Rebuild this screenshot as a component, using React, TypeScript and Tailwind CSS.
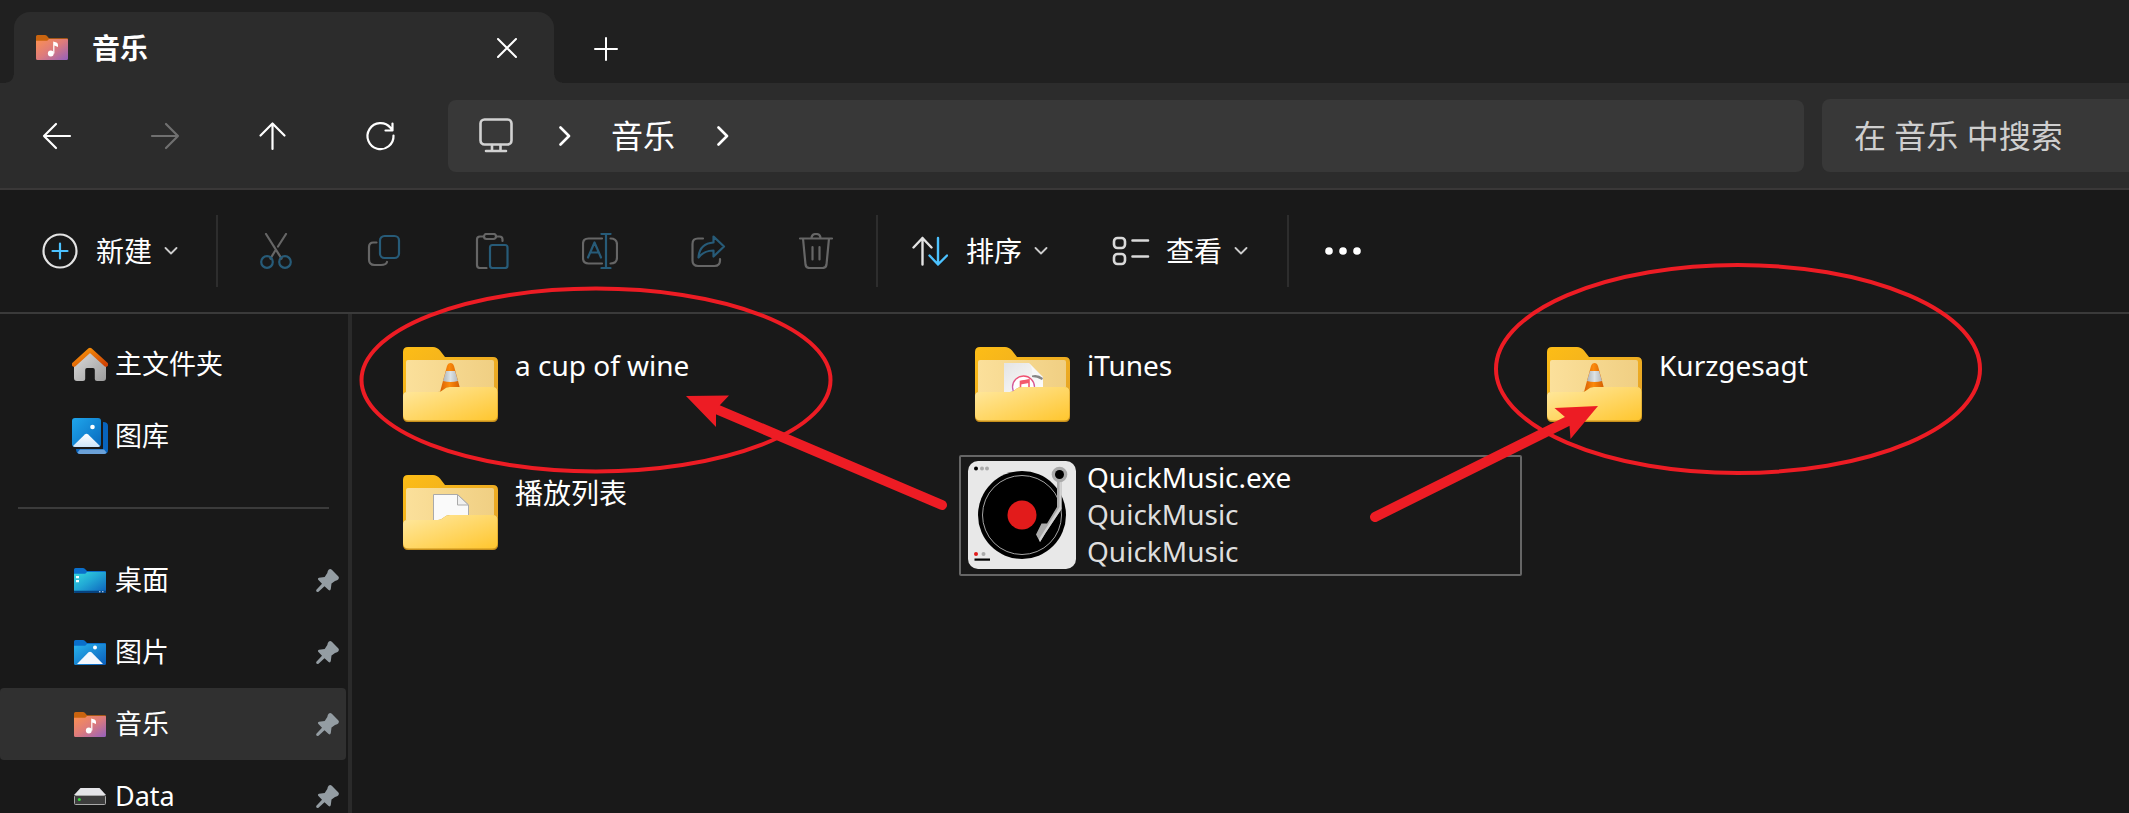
import type { ReactNode } from "react";

/* ---------- small folder icons ---------- */

function MusicFolder() {
  return (
    <svg className="h-[25px] w-8" viewBox="0 0 32 25" aria-hidden="true">
      <defs>
        <linearGradient id="mf" x1="0" y1="0" x2="1" y2="1">
          <stop offset="0" stopColor="#fd9150" />
          <stop offset="0.5" stopColor="#dd7b7c" />
          <stop offset="1" stopColor="#9460bd" />
        </linearGradient>
      </defs>
      <path d="M0 1.5Q0 0 1.5 0H9Q10 0 10.8.8L13 3.2H31Q32 3.2 32 4.2V12H0Z" fill="#c9640f" />
      <path d="M0 5.8H10.4Q11.2 5.8 11.8 5.2L13 4H31Q32 4 32 5V23.500Q32 25 30.500 25H1.500Q0 25 0 23.500Z" fill="url(#mf)" />
      <circle cx="14.800" cy="18.500" r="2.900" fill="#fff" />
      <path d="M17.200 18.500V6.500L20.500 7.500Q22.300 8.300 22 12L18.400 10.500V18.500Z" fill="#fff" />
    </svg>
  );
}

function DesktopFolder() {
  return (
    <svg className="h-[25px] w-8" viewBox="0 0 32 25" aria-hidden="true">
      <defs>
        <linearGradient id="df" x1="0" y1="0" x2="1" y2="1">
          <stop offset="0" stopColor="#35d8de" />
          <stop offset="0.45" stopColor="#22a9d5" />
          <stop offset="1" stopColor="#0c5fbc" />
        </linearGradient>
      </defs>
      <path d="M0 1.500Q0 0 1.500 0H9Q10 0 10.800.8L13 3H31Q32 3 32 4V12H0Z" fill="#0a6fcb" />
      <path d="M0 5.800H10.400Q11.200 5.800 11.800 5.200L13 4H31Q32 4 32 5V23.500Q32 25 30.500 25H1.500Q0 25 0 23.500Z" fill="url(#df)" />
      <path d="M0 22.800H32V23.500Q32 25 30.500 25H1.500Q0 25 0 23.500Z" fill="#07427f" />
      <path d="M2 8h3v2.200H2zM2 12h3v2.200H2z" fill="#f2ffff" />
      <path d="M25 23.200h1.500v1H25zM28 23.200h1.500v1H28z" fill="#cfe6ff" />
    </svg>
  );
}

function PicturesFolder() {
  return (
    <svg className="h-[25px] w-8" viewBox="0 0 32 25" aria-hidden="true">
      <defs>
        <linearGradient id="pf" x1="0" y1="0" x2="1" y2="1">
          <stop offset="0" stopColor="#28b4ee" />
          <stop offset="1" stopColor="#0a5dbb" />
        </linearGradient>
      </defs>
      <path d="M0 1.500Q0 0 1.500 0H9Q10 0 10.800.8L13 3H31Q32 3 32 4V12H0Z" fill="#0a6fcb" />
      <path d="M0 5.800H10.400Q11.200 5.800 11.800 5.200L13 4H31Q32 4 32 5V23.500Q32 25 30.500 25H1.500Q0 25 0 23.500Z" fill="url(#pf)" />
      <path d="M3 24L14.500 12.300Q16 11 17.500 12.300L29 24Z" fill="#f3f8fe" />
      <circle cx="21" cy="7.500" r="2" fill="#fff" />
    </svg>
  );
}

function HomeIcon() {
  return (
    <svg className="h-[34px] w-9" viewBox="0 0 36 34" aria-hidden="true">
      <defs>
        <linearGradient id="hr" x1="0" y1="0" x2="1" y2="1">
          <stop offset="0" stopColor="#fb9a0a" />
          <stop offset="1" stopColor="#cf4204" />
        </linearGradient>
        <linearGradient id="hb" x1="0" y1="0" x2="1" y2="1">
          <stop offset="0" stopColor="#dedede" />
          <stop offset="1" stopColor="#9c9c9c" />
        </linearGradient>
      </defs>
      <path d="M2 17L18 3L34 17V31Q34 34 31 34H25Q22.800 34 22.800 32V23Q22.800 21 21 21H15Q13.200 21 13.200 23V32Q13.200 34 11 34H5Q2 34 2 31Z" fill="url(#hb)" />
      <path d="M2 17.500L18 3L34 17.500" fill="none" stroke="url(#hr)" strokeWidth="4.400" strokeLinecap="round" strokeLinejoin="round" />
    </svg>
  );
}

function GalleryIcon() {
  return (
    <svg className="size-9" viewBox="0 0 36 36" aria-hidden="true">
      <defs>
        <linearGradient id="gf" x1="0" y1="0" x2="1" y2="1">
          <stop offset="0" stopColor="#1fa6ec" />
          <stop offset="1" stopColor="#0869bd" />
        </linearGradient>
        <linearGradient id="gm" x1="0" y1="0" x2="0" y2="1">
          <stop offset="0" stopColor="#fff" />
          <stop offset="1" stopColor="#cde6fb" />
        </linearGradient>
      </defs>
      <path d="M31 4Q36 4 36 8V32Q36 36 32 36H8Q4 36 4 31H31Z" fill="#0864bd" />
      <path d="M5.500 34.500L8 31.500H32L34.500 34.500Q33.500 36 32 36H8Q6.500 36 5.500 34.500Z" fill="#6ba1d8" />
      <rect width="31" height="31" fill="#191919" />
      <rect width="29" height="29" rx="3" fill="url(#gf)" />
      <path d="M1 28L12.800 16.400Q14.500 15 16.200 16.400L28 28Q27.500 29 26 29H3Q1.500 29 1 28Z" fill="url(#gm)" />
      <circle cx="20.500" cy="9" r="2.300" fill="#fff" />
    </svg>
  );
}

function DriveIcon() {
  return (
    <svg className="h-[17px] w-8" viewBox="0 0 32 17" aria-hidden="true">
      <path d="M6.500 0H25.500L32 7H0Z" fill="#e4e4e8" />
      <rect x="0.500" y="7.500" width="31" height="9" rx="1" fill="#3d3d3d" stroke="#a9a9a9" />
      <circle cx="5.300" cy="11.500" r="1.500" fill="#35d63a" />
    </svg>
  );
}

function PinIcon() {
  return (
    <svg className="size-[23px]" viewBox="0 0 23 23" aria-hidden="true" fill="#949da3">
      <path d="M12.600 .8Q14.200 -.6 15.800 .8L22.200 7.200Q23.600 8.800 22.200 10.400Q21.500 11.200 19 12L15.500 14.500L14.800 20Q14.300 22.200 12.600 21L8.500 17.200L2.500 22.700Q1.200 23.300.5 22.500T.6 20.500L6 14.700L2.200 10.700Q1.400 9.300 3 8.700L8.700 7.900L11.300 4Q11.700 1.700 12.600 .8Z" />
    </svg>
  );
}

/* ---------- large item icons ---------- */

function Folder({ id, children }: { id: string; children: ReactNode }) {
  return (
    <svg className="size-[108px]" viewBox="0 1 108 108" aria-hidden="true">
      <defs>
        <linearGradient id={id + "b"} x1="0" y1="0" x2="1" y2="1">
          <stop offset="0" stopColor="#fdbd16" />
          <stop offset="1" stopColor="#e2a02a" />
        </linearGradient>
        <linearGradient id={id + "i"} x1="0" y1="0" x2="1" y2="0">
          <stop offset="0" stopColor="#fbe09b" />
          <stop offset="1" stopColor="#f0cf83" />
        </linearGradient>
        <linearGradient id={id + "f"} x1="0" y1="0" x2="1" y2="1">
          <stop offset="0" stopColor="#ffe9a2" />
          <stop offset="1" stopColor="#ffc62e" />
        </linearGradient>
      </defs>
      <path d="M7 20Q7 15 12 15H37Q41 15 44 18.500L49 25H97Q102 25 102 30V84Q102 89 97 89H12Q7 89 7 84Z" fill={`url(#${id}b)`} />
      <path d="M10 30Q10 28 12 28H96Q98 28 98 30V62H10Z" fill={`url(#${id}i)`} />
      {children}
      <path d="M7 64Q7 60 11 60H42Q45 60 47 58Q50 55 54 55H97Q102 55 102 60V84Q102 90 97 90H12Q7 90 7 84Z" fill="#c8901c" />
      <path d="M7 64Q7 60 11 60H42Q45 60 47 58Q50 55 54 55H97Q101.500 55 101.500 60V83Q101.500 88.500 96 88.500H13Q7 88.500 7 83Z" fill={`url(#${id}f)`} />
    </svg>
  );
}

function Cone({ id }: { id: string }) {
  return (
    <g>
      <defs>
        <linearGradient id={id + "o"} x1="0" y1="0" x2="1" y2="0">
          <stop offset="0" stopColor="#d85f04" />
          <stop offset="0.45" stopColor="#fb8a0c" />
          <stop offset="1" stopColor="#cf5800" />
        </linearGradient>
        <linearGradient id={id + "w"} x1="0" y1="0" x2="1" y2="0">
          <stop offset="0" stopColor="#aeb3b5" />
          <stop offset="0.5" stopColor="#dce2e5" />
          <stop offset="1" stopColor="#b4b8ba" />
        </linearGradient>
      </defs>
      <path d="M44 60L51 34Q52 31 54.500 31T58 34L65 60Z" fill={`url(#${id}o)`} />
      <path d="M50 39H59L62 49Q54.500 51 47 49Z" fill={`url(#${id}w)`} />
    </g>
  );
}

function Sheet() {
  return (
    <g stroke="#aaa" strokeWidth="1">
      <path d="M37.500 62V34.500H61.500L72.500 45V62Z" fill="#fafafa" />
      <path d="M61.500 34.500V45H72.500Z" fill="#f0f0f0" />
    </g>
  );
}

function TunesSheet() {
  return (
    <g>
      <defs>
        <linearGradient id="ring" x1="0" y1="0" x2="0" y2="1">
          <stop offset="0" stopColor="#f2506e" />
          <stop offset="1" stopColor="#a36be0" />
        </linearGradient>
        <linearGradient id="pg" x1="0" y1="0" x2="1" y2="1">
          <stop offset="0" stopColor="#e4e4e4" />
          <stop offset="1" stopColor="#fff" />
        </linearGradient>
      </defs>
      <path d="M36 62V31H61L75 45V62Z" fill="url(#pg)" />
      <path d="M61 31Q65 36 64 43Q70 42 75 46Z" fill="#f8f8f8" />
      <path d="M64 43.500Q70 42 75 46L74 48Q69 45 64 45Z" fill="#858585" />
      <circle cx="55.500" cy="55" r="11" fill="#fff" stroke="url(#ring)" strokeWidth="1.300" />
      <path d="M52.500 60V49.500L61 48V58" fill="none" stroke="#f35a6c" strokeWidth="1.600" />
      <path d="M52.500 49L61 47.500V51L52.500 52.500Z" fill="#f35a6c" />
    </g>
  );
}

function Turntable() {
  return (
    <svg className="size-[108px]" viewBox="0 0 108 108" aria-hidden="true">
      <rect width="108" height="108" rx="10" fill="#e8e8e8" />
      <circle cx="54" cy="54" r="44" fill="#000" />
      <circle cx="54" cy="54" r="39.500" fill="none" stroke="#a4a4a4" strokeWidth="1" />
      <circle cx="54" cy="54" r="14.500" fill="#e21b1b" />
      <path d="M89 20H93.500V48L77.500 72L72 81L68 73.500L73.500 62.500H79L89 46Z" fill="#aaa" />
      <path d="M91.500 20H93.500V48L77.500 72L72 81L71 78L89 50L91.500 46Z" fill="#d2d2d2" />
      <circle cx="91.500" cy="13.500" r="7.800" fill="#aaa" />
      <circle cx="91.500" cy="13.500" r="4.500" fill="#000" />
      <circle cx="8" cy="7.500" r="2" fill="#000" />
      <circle cx="14" cy="7.500" r="2" fill="#aaa" />
      <circle cx="19" cy="7.500" r="2" fill="#aaa" />
      <circle cx="8" cy="93" r="2" fill="#e21b1b" />
      <circle cx="15.500" cy="93" r="2" fill="#aaa" />
      <rect x="6.500" y="97.500" width="15.500" height="2.200" fill="#000" />
    </svg>
  );
}

/* ---------- line icons ---------- */

function Line({ children, color = "#fff", width = 2.2 }: { children: ReactNode; color?: string; width?: number }) {
  return (
    <svg className="size-9" viewBox="0 0 36 36" fill="none" stroke={color} strokeWidth={width} strokeLinecap="round" strokeLinejoin="round" aria-hidden="true">
      {children}
    </svg>
  );
}

const GREY = "#666";
const BLUE = "#275b78";

const tools: { label: string; icon: ReactNode }[] = [
  {
    label: "剪切",
    icon: (
      <Line color={GREY}>
        <path d="M8 1L23.500 25.500M28 1L20 13.500M17 18L12.500 25.500" />
        <circle cx="9" cy="29" r="5.800" stroke={BLUE} />
        <circle cx="27" cy="29" r="5.800" stroke={BLUE} />
      </Line>
    ),
  },
  {
    label: "复制",
    icon: (
      <Line color={GREY}>
        <path d="M10.500 9.500H7.500Q3 9.500 3 14V26.500Q3 32 8.500 32H15Q20 32 21 29" />
        <rect x="14" y="3" width="19" height="22" rx="4.500" stroke={BLUE} />
      </Line>
    ),
  },
  {
    label: "粘贴",
    icon: (
      <Line color={GREY}>
        <path d="M10 3.500H6Q3 3.500 3 6.500V32Q3 35 6 35H12.500M22 3.500H25.500Q28.500 3.500 28.500 6.500V8" />
        <rect x="10" y="1" width="12" height="5" rx="2.500" />
        <rect x="16" y="12" width="17.500" height="23" rx="2.500" stroke={BLUE} />
      </Line>
    ),
  },
  {
    label: "重命名",
    icon: (
      <Line color={GREY}>
        <path d="M20 5.500H6.500Q1 5.500 1 11V25Q1 30.500 6.500 30.500H20M28.500 5.500Q35 5.500 35 11.500V24.500Q35 30.500 28.500 30.500" />
        <path d="M6 24.500L12.500 9.500L19 24.500M8.500 19.500H16.500M19.500 1H28.500M19.500 35H28.500M24 1V35" stroke={BLUE} />
      </Line>
    ),
  },
  {
    label: "共享",
    icon: (
      <Line color={GREY}>
        <path d="M13 5.500H8Q2.500 5.500 2.500 11V27.500Q2.500 33 8 33H24.500Q30 33 30 27.500V26" />
        <path d="M23.500 3.500L34 13.500L23.500 23.500V17.500Q14 17.500 8.500 24.500Q9.500 10.500 23.500 9.500Z" stroke={BLUE} />
      </Line>
    ),
  },
  {
    label: "删除",
    icon: (
      <Line color={GREY}>
        <path d="M2 5.500H34M5 5.500L7.500 31.500Q8 35 11.500 35H24.500Q28 35 28.500 31.500L31 5.500M13.500 5.500Q13.500 1 18 1T22.500 5.500M14.500 14V26.500M21.500 14V26.500" />
      </Line>
    ),
  },
];

function Caret() {
  return (
    <svg className="h-2 w-3.5" viewBox="0 0 14 8" fill="none" stroke="#ccc" strokeWidth="1.800" strokeLinecap="round" strokeLinejoin="round" aria-hidden="true">
      <path d="M1.500 1L7 6.500L12.500 1" />
    </svg>
  );
}

function Crumb() {
  return (
    <svg className="h-5 w-3" viewBox="0 0 12 20" fill="none" stroke="#fff" strokeWidth="2.600" strokeLinecap="round" strokeLinejoin="round" aria-hidden="true">
      <path d="M1.500 1.500L10 10L1.500 18.500" />
    </svg>
  );
}

/* ---------- page ---------- */

function TabBar() {
  return (
    <header className="flex h-[83px] shrink-0 items-end bg-[#202020] pl-3.5">
      <div className="relative flex h-[71px] w-[540px] items-center rounded-t-2xl bg-[#2c2c2c] pr-[37px] pl-[22px]">
        <span className="absolute bottom-0 -left-2 size-2 bg-[radial-gradient(circle_at_top_left,#202020_7px,#2c2c2c_8px)]" />
        <span className="absolute -right-2 bottom-0 size-2 bg-[radial-gradient(circle_at_top_right,#202020_7px,#2c2c2c_8px)]" />
        <MusicFolder />
        <span className="ml-6 flex-1 text-[28px] font-bold">音乐</span>
        <button type="button" aria-label="关闭标签页">
          <svg className="size-5" viewBox="0 0 20 20" stroke="#fff" strokeWidth="2" strokeLinecap="round" aria-hidden="true">
            <path d="M1 1L19 19M19 1L1 19" />
          </svg>
        </button>
      </div>
      <button type="button" aria-label="新建标签页" className="flex h-[68px] items-center px-10">
        <svg className="size-6" viewBox="0 0 24 24" stroke="#fff" strokeWidth="2" strokeLinecap="round" aria-hidden="true">
          <path d="M12 1V23M1 12H23" />
        </svg>
      </button>
    </header>
  );
}

const navButtons: { label: string; color: string; icon: ReactNode; disabled?: boolean }[] = [
  { label: "后退", color: "#fff", icon: <path d="M31 18H5M17 6L5 18L17 30" /> },
  { label: "前进", color: "#707070", icon: <path d="M5 18H31M19 6L31 18L19 30" />, disabled: true },
  { label: "向上", color: "#fff", icon: <path d="M17.500 31V5.500M5.500 17.500L17.500 5.500L29.500 17.500" /> },
  { label: "刷新", color: "#fff", icon: <path d="M30.500 17.500A13 13 0 1 1 27.500 9.800L29.500 12.200M29.500 5.500V12.500H22.500" /> },
];

function NavBar() {
  return (
    <div className="flex h-[107px] shrink-0 items-center border-b-2 border-[#3a3838] bg-[#2c2c2c] pl-[39px]">
      <nav aria-label="导航" className="mr-[49px] flex gap-[72px]">
        {navButtons.map((b) => (
          <button key={b.label} type="button" aria-label={b.label} disabled={b.disabled}>
            <Line color={b.color}>{b.icon}</Line>
          </button>
        ))}
      </nav>
      <div className="flex h-[72px] min-w-0 flex-1 items-center rounded-lg bg-[#383838] pl-[30px] text-[32px] text-white">
        <svg className="size-9" viewBox="0 0 36 36" fill="none" stroke="#d2d2d2" strokeWidth="2.600" strokeLinecap="round" strokeLinejoin="round" aria-hidden="true">
          <rect x="2.500" y="1.500" width="31" height="25" rx="4" />
          <path d="M14 27V32M22.500 27V32M8 33H28" />
        </svg>
        <span className="ml-[45px]"><Crumb /></span>
        <button type="button" className="ml-10">音乐</button>
        <span className="ml-[42px]"><Crumb /></span>
      </div>
      <input
        type="search"
        aria-label="搜索"
        placeholder="在 音乐 中搜索"
        className="ml-[18px] h-[73px] w-[307px] shrink-0 rounded-l-lg bg-[#383838] pl-8 text-[32px] text-white outline-none placeholder:text-[#cfcfcf]"
      />
    </div>
  );
}

function Divider() {
  return <span className="h-[72px] w-0.5 shrink-0 bg-[#2d2d2d]" />;
}

function Toolbar() {
  return (
    <div role="toolbar" aria-label="命令" className="flex h-[124px] shrink-0 items-center border-b-2 border-[#3a3a3a] bg-[#191919] text-[28px]">
      <button type="button" className="flex w-[216px] items-center pl-[42px]">
        <Line color="#e3e3e3">
          <circle cx="18" cy="18" r="16.500" />
          <path d="M18 10.500V25.500M10.500 18H25.500" stroke="#4cc2ff" />
        </Line>
        <span className="mr-3 ml-[18px]">新建</span>
        <Caret />
      </button>
      <Divider />
      <div className="flex gap-[72px] pr-[42px] pl-10">
        {tools.map((t) => (
          <button key={t.label} type="button" aria-label={t.label} disabled>
            {t.icon}
          </button>
        ))}
      </div>
      <Divider />
      <button type="button" className="ml-[34px] flex items-center">
        <Line color="#e3e3e3" width={2.4}>
          <path d="M10.500 31.500V5M1.500 14.500L10.500 5L19.500 14.500" />
          <path d="M26 5V31.500M17.500 22.500L26 31.500L35 22.500" stroke="#4cc2ff" />
        </Line>
        <span className="mr-3 ml-[18px]">排序</span>
        <Caret />
      </button>
      <button type="button" className="ml-16 flex items-center">
        <svg className="h-9 w-[38px]" viewBox="0 0 38 36" fill="none" stroke="#d9d9d9" strokeWidth="2.600" strokeLinecap="round" aria-hidden="true">
          <rect x="2" y="5" width="11" height="10" rx="3.500" />
          <rect x="2" y="21" width="11" height="10" rx="3.500" />
          <path d="M20.500 7.500H36M20.500 23.500H36" />
        </svg>
        <span className="mr-3 ml-4">查看</span>
        <Caret />
      </button>
      <span className="w-[39px]" />
      <Divider />
      <button type="button" aria-label="更多" className="ml-9">
        <svg className="h-2 w-9" viewBox="0 0 36 8" fill="#fff" aria-hidden="true">
          <circle cx="4" cy="4" r="3.800" />
          <circle cx="18" cy="4" r="3.800" />
          <circle cx="32" cy="4" r="3.800" />
        </svg>
      </button>
    </div>
  );
}

function SideItem({ icon, label, pinned, active }: { icon: ReactNode; label: string; pinned?: boolean; active?: boolean }) {
  return (
    <li>
      <a href="#" aria-current={active ? "page" : undefined} className={`flex h-[72px] items-center rounded pr-[7px] pl-[72px] ${active ? "bg-[#303030]" : ""}`}>
        <span className="flex w-9 justify-center">{icon}</span>
        <span className="ml-[7px] flex-1">{label}</span>
        {pinned && <PinIcon />}
      </a>
    </li>
  );
}

function Sidebar() {
  return (
    <aside className="w-[352px] shrink-0 overflow-hidden border-r-4 border-[#2a2a2a] pt-3.5 pr-0.5">
      <ul>
        <SideItem icon={<HomeIcon />} label="主文件夹" />
        <SideItem icon={<GalleryIcon />} label="图库" />
      </ul>
      <hr className="mt-[35px] mr-[17px] mb-[35px] ml-[18px] border-t-2 border-[#3b3b3b]" />
      <ul>
        <SideItem icon={<DesktopFolder />} label="桌面" pinned />
        <SideItem icon={<PicturesFolder />} label="图片" pinned />
        <SideItem icon={<MusicFolder />} label="音乐" pinned active />
        <SideItem icon={<DriveIcon />} label="Data" pinned />
      </ul>
    </aside>
  );
}

function Tile({ icon, name, details, focused }: { icon: ReactNode; name: string; details?: string[]; focused?: boolean }) {
  return (
    <li>
      <button
        type="button"
        className={`flex h-[121px] w-full items-start rounded-xs border-2 px-[7px] py-0.5 text-left ${focused ? "border-[#666]" : "border-transparent"}`}
      >
        <span className="mt-0.5 shrink-0">{icon}</span>
        <span className={`ml-[11px] flex flex-col leading-[37px] ${details ? "" : "pt-4"}`}>
          <span>{name}</span>
          {details?.map((d, i) => (
            <span key={i} className="text-[#dedede]">{d}</span>
          ))}
        </span>
      </button>
    </li>
  );
}

function Files() {
  return (
    <main className="min-w-0 flex-1 overflow-hidden pt-[13px] pl-[35px] text-[28px]">
      <ul className="grid grid-cols-[repeat(3,563px)] gap-x-[9px] gap-y-[7px]">
        <Tile icon={<Folder id="f1"><Cone id="c1" /></Folder>} name="a cup of wine" />
        <Tile icon={<Folder id="f2"><TunesSheet /></Folder>} name="iTunes" />
        <Tile icon={<Folder id="f3"><Cone id="c3" /></Folder>} name="Kurzgesagt" />
        <Tile icon={<Folder id="f4"><Sheet /></Folder>} name="播放列表" />
        <Tile icon={<Turntable />} name="QuickMusic.exe" details={["QuickMusic", "QuickMusic"]} focused />
      </ul>
    </main>
  );
}

function Annotations() {
  return (
    <svg className="pointer-events-none absolute inset-0 size-full" fill="none" stroke="#ed1c24" aria-hidden="true">
      <ellipse cx="596" cy="380" rx="234.500" ry="91.500" strokeWidth="4" />
      <ellipse cx="1738" cy="369" rx="242" ry="104" strokeWidth="4" />
      <path d="M942 505L716 409" strokeWidth="10" strokeLinecap="round" />
      <path d="M686 396L729 395.500L720 405L716 414V427Z" fill="#ed1c24" stroke="none" />
      <path d="M1375 517L1568 421" strokeWidth="10" strokeLinecap="round" />
      <path d="M1598 406L1554.500 408L1565 417L1569.500 426L1570.500 439Z" fill="#ed1c24" stroke="none" />
    </svg>
  );
}

export default function App() {
  return (
    <div className="relative flex h-screen flex-col overflow-hidden bg-[#191919] font-['Noto_Sans','Noto_Sans_CJK_SC',sans-serif] text-[27px] leading-9 text-white">
      <TabBar />
      <NavBar />
      <Toolbar />
      <div className="flex min-h-0 flex-1">
        <Sidebar />
        <Files />
      </div>
      <Annotations />
    </div>
  );
}
